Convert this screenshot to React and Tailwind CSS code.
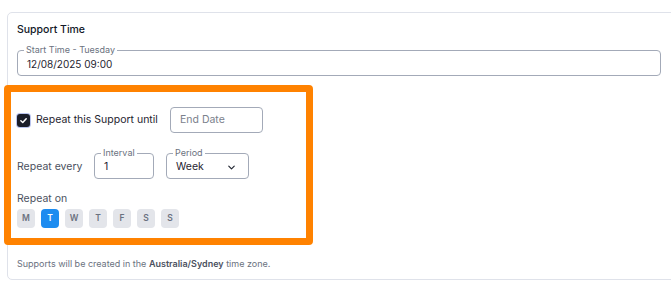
import { ChevronDown } from 'lucide-react'

const days = ['M', 'T', 'W', 'T', 'F', 'S', 'S']

function Outlined({ label, className, children }) {
  return (
    <fieldset className={`border border-[#a3aab8] rounded-[4px] px-[9px] pt-[2px] pb-[4px] ${className}`}>
      <legend className="px-[2px] -ml-[3px] text-[9px] leading-[10px] text-[#6b7280]">{label}</legend>
      {children}
    </fieldset>
  )
}

export default function App() {
  return (
    <div className="w-[671px] h-[289px] overflow-hidden bg-white font-['Inter',sans-serif] text-[#1f2430]">
      <div className="ml-[7px] mt-[12px] w-[670px] border border-[#dfe2ea] rounded-[5px] pl-[9px] pr-[10px] pt-[10px] pb-[9px]">
        <h2 className="text-[10.5px] leading-[14px] font-medium text-[#111827]">Support Time</h2>

        <Outlined label="Start Time - Tuesday" className="mt-[8px] w-[644px]">
          <div className="text-[10px] leading-[14px]">12/08/2025 09:00</div>
        </Outlined>

        <div className="mt-[9px] -ml-[13px] w-[309px] border-[7px] border-[#ff8200] rounded-[4px] pl-[6px] pt-[15px] pb-[10px]">
          <div className="flex items-center h-[26px]">
            <span className="w-[13px] h-[13px] rounded-[3px] bg-[#1a1d29] ring-1 ring-[#b9c4ee] flex items-center justify-center">
              <svg width="9" height="9" viewBox="0 0 12 12" fill="none">
                <path d="M2.5 6.3 L5 8.6 L9.6 3.6" stroke="white" strokeWidth="2" strokeLinecap="round" strokeLinejoin="round" />
              </svg>
            </span>
            <span className="ml-[6px] w-[122px] text-[10.5px] text-[#1f2430] whitespace-nowrap">Repeat this Support until</span>
            <div className="ml-[12px] w-[93px] h-[26px] border border-[#a3aab8] rounded-[4px] px-[9px] flex items-center text-[10.5px] text-[#7b818c]">
              End Date
            </div>
          </div>

          <div className="flex items-end mt-[15px]">
            <span className="text-[10.5px] leading-[14px] text-[#4b5160] mb-[5px] w-[77px]">Repeat every</span>
            <Outlined label="Interval" className="w-[60px]">
              <div className="text-[10.5px] leading-[14px]">1</div>
            </Outlined>
            <Outlined label="Period" className="ml-[12px] w-[83px]">
              <div className="flex items-center justify-between text-[10.5px] leading-[14px]">
                <span>Week</span>
                <ChevronDown size={11} strokeWidth={2.5} className="mr-[2px]" />
              </div>
            </Outlined>
          </div>

          <div className="mt-[13px] text-[10.5px] leading-[14px] text-[#4b5160]">Repeat on</div>
          <div className="flex gap-[6px] mt-[3px]">
            {days.map((d, i) => (
              <span
                key={i}
                className={`w-[18px] h-[19px] rounded-[4px] flex items-center justify-center text-[8.5px] font-semibold ${
                  i === 1 ? 'bg-[#1d8cf0] text-white' : 'bg-[#e3e5ea] text-[#6b7280]'
                }`}
              >
                {d}
              </span>
            ))}
          </div>
        </div>

        <p className="mt-[13px] text-[9px] leading-[12px] text-[#6b7280]">
          Supports will be created in the <span className="font-semibold text-[#4b5160]">Australia/Sydney</span> time zone.
        </p>
      </div>
    </div>
  )
}
